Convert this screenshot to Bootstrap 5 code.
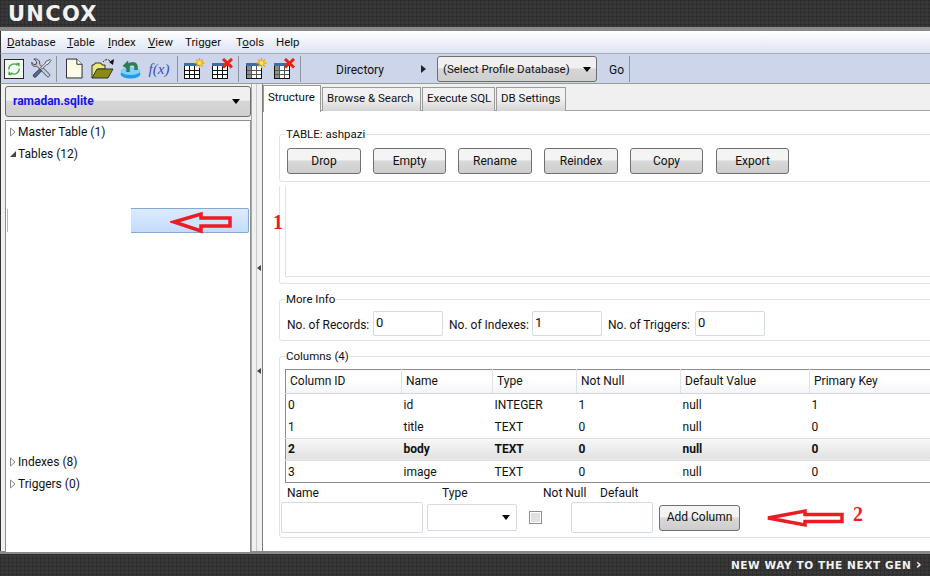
<!DOCTYPE html>
<html lang="en"><head><meta charset="utf-8"><title>SQLite Manager</title>
<link href="https://cdn.jsdelivr.net/npm/bootstrap@5.3.0/dist/css/bootstrap.min.css" rel="stylesheet">
<style>
html,body{height:576px;overflow:hidden}
body{font:12px/15px Roboto,"Liberation Sans",sans-serif;color:#111;background:#fff;width:930px}
.dark-strip{background:linear-gradient(#2e2e2e 1px,transparent 1px) 0 0/4px 4px,linear-gradient(90deg,#2e2e2e 1px,transparent 1px) 0 0/4px 4px,#393939;color:#f2f2f2}
.top-strip{height:31px;border-bottom:4px solid #8a8a8a;padding:3px 0 0 8px;font:bold 21px/22px "DejaVu Sans",sans-serif;letter-spacing:1.3px}
.foot-strip{height:25px;border-top:3px solid #8a8a8a;padding:4px 8px 0 0;font:bold 10.5px/15px "DejaVu Sans",sans-serif;letter-spacing:.6px;text-align:right}
.foot-arrow{font-size:14px;line-height:12px}
.menu-bar{height:22px;padding:4px 0 0 6px;background:linear-gradient(#fff,#dde3f2);border-left:1px solid #333;font-size:11.5px}
.menu-bar span{display:block}
.w60{width:60px}.w41{width:41px}.w40{width:40px}.w37{width:37px}.w51{width:51px}
.tool-bar{height:31px;background:#ccd5ea;border-top:1px solid #a9adb8;border-bottom:1px solid #9b9b9b;border-left:1px solid #333}
.tool-cell{display:flex;align-items:center;justify-content:center;height:29px;flex:none}
.c24{width:24px}.c26{width:26px}.c28{width:28px}.c30{width:30px}.c32{width:32px}
.tool-sep{width:1px;height:26px;background:#8f939c;margin:0 1px;flex:none}
.sep-a{margin-left:5px}.sep-b{margin-left:3px}.sep-c{margin-left:4px}
.fx-text{font:italic 15px/20px "Liberation Serif",serif;color:#3a50b8}
.combo-box{background:linear-gradient(#f0f0f0 45%,#d6d6d6 50%,#cfcfcf);border:1px solid #6f6f6f;border-radius:3px;display:flex;align-items:center}
.combo-caret{width:0;height:0;border:4px solid transparent;border-top:5px solid #000;border-bottom:0;margin-left:auto}
.dir-caret{width:0;height:0;border:4px solid transparent;border-left:5px solid #222;border-right:0;margin-right:11px;flex:none}
.nav-label{width:119px;padding:3px 0 0 34px;flex:none}
.profile-combo{width:160px;height:26px;padding:0 5px;flex:none;margin-top:1px;font-size:11.5px}
.profile-combo span:first-child{padding-top:1px}
.go-label{width:31px;padding:3px 0 0 12px;flex:none}
.work-area{height:467px;border-left:1px solid #333}
.side-pane{width:250px;padding:2px 0 0 4px;flex:none;background:#f0f0f0}
.db-combo{height:31px;padding:0 10px 0 7px;font-weight:bold;font-size:12px;color:#1414ee}
.tree-pane{height:432px;margin-top:3px;background:#fff;border:1px solid #8f8f8f;border-bottom:0}
.tree-row{height:22px;display:flex;align-items:center;padding-left:4px;gap:2px}
.sel-row{height:25px;margin:43px 0 0 1px;position:relative}
.sel-mark{position:absolute;left:0;top:1px;height:23px;width:1px;background:#a3bfdc}
.sel-bar{position:absolute;left:124px;right:1px;top:0;height:25px;background:linear-gradient(#dcebfd,#c3dcfc);border:1px solid #84a9d4;border-left:0;border-radius:0 2px 2px 0}
.tree-gap{height:218px}
.split-pane{width:12px;flex:none;background:#f0f0f0;border-left:1px solid #a8a8a8;border-right:1px solid #7c7c7c;position:relative}
.split-line{position:absolute;left:4px;top:0;bottom:0;width:1px;background:#c9c9c9}
.split-tick{position:absolute;left:5px;width:0;height:0;border:3px solid transparent;border-right:4px solid #444;border-left:0}
.tick-a{top:181px}.tick-b{top:284px}
.main-pane{flex:1;min-width:0;overflow:hidden;background:#fff}
.tab-strip{height:27px;background:#f0f0f0;border-bottom:1px solid #a4a4a4;padding-top:1px;font-size:11.5px}
.tab-item{height:24px;margin-top:2px;padding:0 4px 2px;background:linear-gradient(#f2f2f2 45%,#d3d3d3);border:1px solid #9a9a9a;border-bottom:0;display:flex;align-items:center;margin-right:1px;white-space:nowrap;flex:none}
.tab-on{height:27px;margin-top:0;padding-bottom:4px;background:#fff;position:relative;z-index:1;width:58px}
.t99{width:99px}.t73{width:73px}.t70{width:70px}
.group-box{width:700px;margin:0 0 0 16px;border:1px solid #dce3ea;border-radius:3px;padding:0;min-width:0;position:relative}
.group-title{position:absolute;left:5px;top:-8px;background:#fff;padding:0 1px;line-height:15px;font-size:11.5px}
.g-one{margin-top:23px;height:48px;padding:13px 0 0 7px}
.btn-line{gap:12px}
.g-two{height:98px;margin-top:4px;border-top:0;border-radius:0 0 3px 3px;padding-left:5px}
.inner-box{height:91px;border:1px solid #dce3ea;border-top:0}
.g-three{height:42px;margin-top:15px;padding:11px 0 0 7px}
.g-four{height:182px;margin-top:15px;padding:12px 0 0 5px}
.qt-btn{background:linear-gradient(#f4f4f4 45%,#d9d9d9 50%,#cdcdcd);border:1px solid #707070;border-radius:3px;height:26px;padding:0;color:#111;font-size:12px;line-height:15px}
.b74{width:74px}.b73{width:73px}.push-one{margin-left:1px}
.info-input{width:70px;height:25px;border:1px solid #d5dbe2;border-radius:2px;padding:0 3px 3px 2px;font-size:13px;background:#fff;color:#111}
.i-name{width:142px;height:31px}.i-def{width:82px;height:31px}
.lab-rec,.lab-idx,.lab-trg{padding-top:3px;flex:none}
.lab-rec{width:86px}.lab-idx{width:89px;padding-left:6px}.lab-trg{width:93px;padding-left:6px}
.data-table{width:660px;table-layout:fixed;border:1px solid #8c8c8c;margin:0;height:114px;--bs-table-bg:transparent;font-size:12px}
.data-table th{font-weight:400;height:24px;padding:0 0 0 4px;border-right:1px solid #dfe3e8;background:linear-gradient(#fff 45%,#f2f4f7);border-bottom:1px solid #d4d8dc;vertical-align:middle;color:#111}
.data-table td{height:22px;padding:2px 0 0 2px;vertical-align:middle;border:0;color:#111}
.k116{width:116px}.k91{width:91px}.k84{width:84px}.k104{width:104px}.k129{width:129px}
.sel-line td{font-weight:bold;padding-top:1px;background:linear-gradient(#f7f7f7,#e1e1e1);border-top:1px solid #dcdcdc;border-bottom:1px solid #dcdcdc}
.add-labels{height:19px;padding-left:2px}
.add-labels span{display:block;line-height:20px}
.l155{width:155px}.l101{width:101px}.l57{width:57px}
.add-row{margin-left:-4px;align-items:center;height:31px}
.type-combo{width:90px;height:27px;margin-left:4px;border:1px solid #d5dbe2;border-radius:2px;padding-right:6px;background:#fff}
.check-mark{width:13px;height:13px;margin:0 29px 0 12px;border:1px solid #8e8e8e;background:#dfe1e4;box-shadow:inset 0 0 0 1px #fff}
.add-btn{width:81px;margin-left:6px}
.over-ink{position:absolute;pointer-events:none}
.red-num{color:#ed1c24;font:bold 20px/20px "Liberation Serif",serif}
.num-one{left:273px;top:212px}.num-two{left:853px;top:504px}
.arrow-one{left:170px;top:210px}.arrow-two{left:765px;top:506px}
</style></head><body>
<div class="dark-strip top-strip">UNCOX</div>
<div class="menu-bar d-flex">
<span class="w60"><u>D</u>atabase</span><span class="w41"><u>T</u>able</span><span class="w40"><u>I</u>ndex</span><span class="w37"><u>V</u>iew</span><span class="w51">Trigger</span><span class="w40">T<u>o</u>ols</span><span>Help</span>
</div>
<div class="tool-bar d-flex align-items-center">
<div class="tool-cell c26"><svg width="20" height="20" viewBox="0 0 21 21"><rect x=".5" y=".5" width="20" height="20" fill="#f4f8f0" stroke="#222"/><path d="M5 11a5.500 5.500 0 0 1 9-4.500" fill="none" stroke="#3aa545" stroke-width="1.300"/><path d="M12.500 4l4 .3-.4 4z" fill="#3aa545"/><path d="M16 10a5.500 5.500 0 0 1-9 4.500" fill="none" stroke="#3aa545" stroke-width="1.300"/><path d="M8.500 17l-4-.3.400-4z" fill="#3aa545"/></svg></div>
<div class="tool-cell c28"><svg width="21" height="21" viewBox="0 0 22 22"><path d="M3 1l3 3-.5 2.500L3 7 .8 4.500C.5 8 3 9.500 6 8.500l11 11c1 1 3.500-1 2.500-2.500L9 6.500C10 3 7 .5 3 1z" fill="#c4ccd6" stroke="#333" stroke-width=".9"/><path d="M20 1.500l1 1-3 4-1.500.3-5 5-1.500-1.500 5-5 .3-1.500z" fill="#e3e6ea" stroke="#333" stroke-width=".8"/><path d="M9 11.500l2 2-6 6.500c-1 1-3.500-1-2.500-2.500z" fill="#4c6f9a" stroke="#223" stroke-width=".8"/></svg></div>
<div class="tool-sep"></div>
<div class="tool-cell c32"><svg width="17" height="21" viewBox="0 0 18 21"><path d="M.5.5h11l5.500 5.500v14.500H.5z" fill="#fbfbe8" stroke="#222"/><path d="M11.500.5V6H17" fill="#fff" stroke="#222"/></svg></div>
<div class="tool-cell c24"><svg width="23" height="21" viewBox="0 0 23 21"><path d="M1 20V7h2l1-2h6l1 2h3v4H7L1 20z" fill="#ece97a" stroke="#333"/><path d="M1 20l5-9h16l-5 9z" fill="#8a8a14" stroke="#333"/><path d="M12 4c2-3 5-3 7-1" fill="none" stroke="#222" stroke-dasharray="2 1"/><path d="M23 1l-1 6-4-3z" fill="#111"/></svg></div>
<div class="tool-cell c32"><svg width="21" height="21" viewBox="0 0 21 21"><ellipse cx="10.500" cy="16" rx="10" ry="4.500" fill="#1f9bea"/><ellipse cx="10.500" cy="13" rx="10" ry="4" fill="#7fd0fa"/><path d="M8 14V9c0-4 7-4 8-1v4" fill="none" stroke="#2f7d55" stroke-width="3.500"/><path d="M2.500 8L8 2.500 9.500 12z" fill="#2f7d55"/></svg></div>
<div class="tool-cell fx-text c26">f(x)</div>
<div class="tool-sep sep-a"></div>
<div class="tool-cell c30"><svg width="21" height="21" viewBox="0 0 21 21"><rect x=".5" y="6.500" width="15" height="14" fill="#fff" stroke="#111"/><rect x="0" y="5" width="16" height="3" fill="#3a6ea5"/><path d="M5.500 8v12M10.500 8v12M1 12.500h14M1 16.500h14" stroke="#111"/><path d="M15.500 0v10M10.500 5h10M12 1.500l7 7M19 1.500l-7 7" stroke="#f7a400" stroke-width="1.400"/><circle cx="15.500" cy="5" r="2" fill="#ffe94d"/></svg></div>
<div class="tool-cell c26"><svg width="21" height="21" viewBox="0 0 21 21"><rect x=".5" y="6.500" width="15" height="14" fill="#fff" stroke="#111"/><rect x="0" y="5" width="16" height="3" fill="#3a6ea5"/><path d="M5.500 8v12M10.500 8v12M1 12.500h14M1 16.500h14" stroke="#111"/><path d="M11 1l9 8.500M20 1l-9 8.500" stroke="#e8220c" stroke-width="3"/></svg></div>
<div class="tool-sep sep-b"></div>
<div class="tool-cell c32"><svg width="21" height="21" viewBox="0 0 21 21"><rect x=".5" y="6.500" width="15" height="14" fill="#fff" stroke="#111"/><rect x="1" y="8" width="4" height="12" fill="#8c8f8c"/><rect x="0" y="5" width="16" height="3" fill="#3a6ea5"/><path d="M5.500 8v12M10.500 8v12M1 12.500h14M1 16.500h14" stroke="#555"/><path d="M15.500 0v10M10.500 5h10M12 1.500l7 7M19 1.500l-7 7" stroke="#f7a400" stroke-width="1.400"/><circle cx="15.500" cy="5" r="2" fill="#ffe94d"/></svg></div>
<div class="tool-cell c24"><svg width="21" height="21" viewBox="0 0 21 21"><rect x=".5" y="6.500" width="15" height="14" fill="#fff" stroke="#111"/><rect x="1" y="8" width="4" height="12" fill="#8c8f8c"/><rect x="0" y="5" width="16" height="3" fill="#3a6ea5"/><path d="M5.500 8v12M10.500 8v12M1 12.500h14M1 16.500h14" stroke="#555"/><path d="M11 1l9 8.500M20 1l-9 8.500" stroke="#e8220c" stroke-width="3"/></svg></div>
<div class="tool-sep sep-c"></div>
<div class="nav-label">Directory</div>
<div class="dir-caret"></div>
<div class="combo-box profile-combo"><span>(Select Profile Database)</span><span class="combo-caret"></span></div>
<div class="go-label">Go</div>
<div class="tool-sep"></div>
</div>
<div class="work-area d-flex">
<div class="side-pane">
<div class="combo-box db-combo">ramadan.sqlite<span class="combo-caret"></span></div>
<div class="tree-pane">
<div class="tree-row"><svg width="6" height="10" viewBox="0 0 6 10"><path d="M.5 1l4.500 4-4.500 4z" fill="#fff" stroke="#8a8a8a"/></svg>Master Table (1)</div>
<div class="tree-row"><svg width="6" height="10" viewBox="0 0 6 10"><path d="M0 8l6-6v6z" fill="#444"/></svg>Tables (12)</div>
<div class="sel-row"><span class="sel-mark"></span><span class="sel-bar"></span></div>
<div class="tree-gap"></div>
<div class="tree-row"><svg width="6" height="10" viewBox="0 0 6 10"><path d="M.5 1l4.500 4-4.500 4z" fill="#fff" stroke="#8a8a8a"/></svg>Indexes (8)</div>
<div class="tree-row"><svg width="6" height="10" viewBox="0 0 6 10"><path d="M.5 1l4.500 4-4.500 4z" fill="#fff" stroke="#8a8a8a"/></svg>Triggers (0)</div>
</div>
</div>
<div class="split-pane"><span class="split-line"></span><span class="split-tick tick-a"></span><span class="split-tick tick-b"></span></div>
<div class="main-pane">
<div class="tab-strip d-flex">
<div class="tab-item tab-on">Structure</div><div class="tab-item t99">Browse &amp; Search</div><div class="tab-item t73">Execute SQL</div><div class="tab-item t70">DB Settings</div>
</div>
<div class="group-box g-one"><span class="group-title">TABLE: ashpazi</span>
<div class="d-flex btn-line"><button class="qt-btn b74">Drop</button><button class="qt-btn b73">Empty</button><button class="qt-btn b74">Rename</button><button class="qt-btn b74">Reindex</button><button class="qt-btn b73">Copy</button><button class="qt-btn b73 push-one">Export</button></div>
</div>
<div class="group-box g-two"><div class="inner-box"></div></div>
<div class="group-box g-three"><span class="group-title">More Info</span>
<div class="d-flex align-items-center"><span class="lab-rec">No. of Records:</span><input class="info-input" value="0" readonly><span class="lab-idx">No. of Indexes:</span><input class="info-input" value="1" readonly><span class="lab-trg">No. of Triggers:</span><input class="info-input" value="0" readonly></div>
</div>
<div class="group-box g-four"><span class="group-title">Columns (4)</span>
<table class="table data-table">
<colgroup><col class="k116"><col class="k91"><col class="k84"><col class="k104"><col class="k129"><col></colgroup>
<thead><tr><th>Column ID</th><th>Name</th><th>Type</th><th>Not Null</th><th>Default Value</th><th>Primary Key</th></tr></thead>
<tbody>
<tr><td>0</td><td>id</td><td>INTEGER</td><td>1</td><td>null</td><td>1</td></tr>
<tr><td>1</td><td>title</td><td>TEXT</td><td>0</td><td>null</td><td>0</td></tr>
<tr class="sel-line"><td>2</td><td>body</td><td>TEXT</td><td>0</td><td>null</td><td>0</td></tr>
<tr><td>3</td><td>image</td><td>TEXT</td><td>0</td><td>null</td><td>0</td></tr>
</tbody></table>
<div class="add-labels d-flex"><span class="l155">Name</span><span class="l101">Type</span><span class="l57">Not Null</span><span>Default</span></div>
<div class="add-row d-flex">
<input class="info-input i-name" readonly><div class="combo-box type-combo"><span class="combo-caret"></span></div><span class="check-mark"></span><input class="info-input i-def" readonly><button class="qt-btn add-btn">Add Column</button>
</div>
</div>
</div>
</div>
<div class="dark-strip foot-strip">NEW WAY TO THE NEXT GEN <span class="foot-arrow">›</span></div>
<svg class="over-ink arrow-one" width="64" height="26" viewBox="0 0 64 26"><path d="M4 12L31 4v4h29v8H31v5z" fill="#cfe3fb" stroke="#ed1c24" stroke-width="3.500"/></svg>
<svg class="over-ink arrow-two" width="82" height="24" viewBox="0 0 82 24"><path d="M3 12L40 5v3.500h37v7H40V19z" fill="#fff" stroke="#ed1c24" stroke-width="3.500"/></svg>
<span class="over-ink red-num num-one">1</span><span class="over-ink red-num num-two">2</span>
</body></html>
